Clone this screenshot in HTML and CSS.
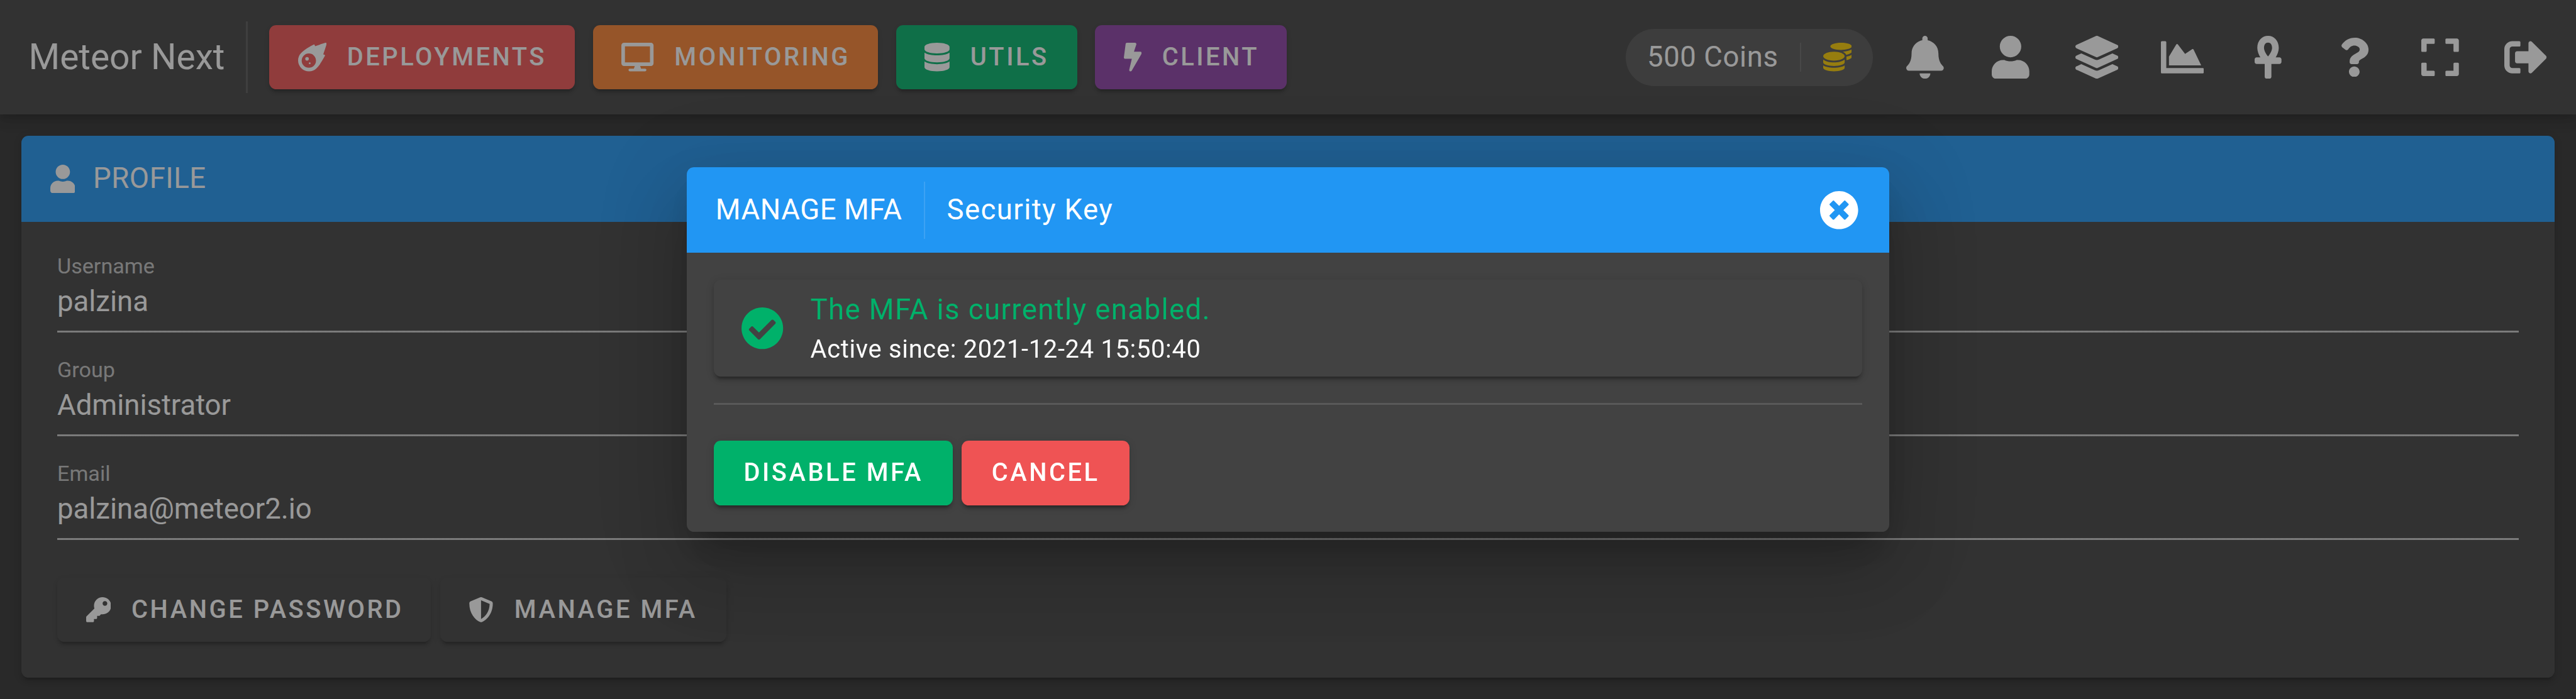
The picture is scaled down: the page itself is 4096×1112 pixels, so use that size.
FILE: index.html
```html
<!DOCTYPE html>
<html lang="en">
<head>
<meta charset="utf-8">
<title>Meteor Next</title>
<link rel="stylesheet" href="styles.css">
</head>
<body>
<div class="app">
  <header class="app-bar">
    <div class="app-title">Meteor Next</div>
    <span class="bar-divider"></span>
    <nav class="nav">
      <a class="btn red nav-deployments"><svg class="w512" viewBox="0 0 512 512"><path d="M511.328,20.8027c-11.60759,38.70264-34.30724,111.70173-61.30311,187.70077,6.99893,2.09372,13.4042,4,18.60653,5.59368a16.06158,16.06158,0,0,1,9.49854,22.906c-22.106,42.29635-82.69047,152.795-142.47819,214.40356-.99984,1.09373-1.99969,2.5-2.99954,3.49995A194.83046,194.83046,0,1,1,57.085,179.41009c.99985-1,2.40588-2,3.49947-3,61.59994-59.90549,171.97367-120.40473,214.37343-142.4982a16.058,16.058,0,0,1,22.90274,9.49988c1.59351,5.09368,3.49947,11.5936,5.5929,18.59351C379.34818,35.00565,452.43074,12.30281,491.12794.70921A16.18325,16.18325,0,0,1,511.328,20.8027ZM319.951,320.00207A127.98041,127.98041,0,1,0,191.97061,448.00046,127.97573,127.97573,0,0,0,319.951,320.00207Zm-127.98041-31.9996a31.9951,31.9951,0,1,1-31.9951-31.9996A31.959,31.959,0,0,1,191.97061,288.00247Zm31.9951,79.999a15.99755,15.99755,0,1,1-15.99755-15.9998A16.04975,16.04975,0,0,1,223.96571,368.00147Z"/></svg>DEPLOYMENTS</a>
      <a class="btn orange nav-monitoring"><svg class="w576" viewBox="0 0 576 512"><path d="M528 0H48C21.5 0 0 21.5 0 48v320c0 26.5 21.5 48 48 48h192l-16 48h-72c-13.3 0-24 10.7-24 24s10.7 24 24 24h272c13.3 0 24-10.7 24-24s-10.7-24-24-24h-72l-16-48h192c26.5 0 48-21.5 48-48V48c0-26.5-21.5-48-48-48zm-16 352H64V64h448v288z"/></svg>MONITORING</a>
      <a class="btn green nav-utils"><svg class="w448" viewBox="0 0 448 512"><path d="M448 73.143v45.714C448 159.143 347.667 192 224 192S0 159.143 0 118.857V73.143C0 32.857 100.333 0 224 0s224 32.857 224 73.143zM448 176v102.857C448 319.143 347.667 352 224 352S0 319.143 0 278.857V176c48.125 33.143 136.208 48.572 224 48.572S399.874 209.143 448 176zm0 160v102.857C448 479.143 347.667 512 224 512S0 479.143 0 438.857V336c48.125 33.143 136.208 48.572 224 48.572S399.874 369.143 448 336z"/></svg>UTILS</a>
      <a class="btn purple nav-client"><svg class="w320" viewBox="0 0 320 512"><path d="M296 160H180.6l42.6-129.8C227.2 15 215.7 0 200 0H56C44 0 33.8 8.9 32.2 20.8l-32 240C-1.7 275.2 9.5 288 24 288h118.7L96.6 482.5c-3.6 15.2 8 29.5 23.3 29.5 8.4 0 16.4-4.4 20.8-12l176-304c9.3-15.9-2.2-36-20.7-36z"/></svg>CLIENT</a>
    </nav>
    <div class="chip">
      <span>500 Coins</span>
      <span class="chip-divider"></span>
      <svg viewBox="0 0 512 512"><path d="M0 405.3V448c0 35.3 86 64 192 64s192-28.7 192-64v-42.7C342.7 434.4 267.2 448 192 448S41.3 434.4 0 405.3zM320 128c106 0 192-28.7 192-64S426 0 320 0 128 28.7 128 64s86 64 192 64zM0 300.4V352c0 35.3 86 64 192 64s192-28.7 192-64v-51.6c-41.3 34-116.9 51.6-192 51.6S41.3 334.4 0 300.4zm416 11c57.3-11.1 96-31.7 96-55.4v-42.7c-23.2 16.4-57.3 27.6-96 34.5v63.6zM192 160C86 160 0 195.8 0 240s86 80 192 80 192-35.8 192-80-86-80-192-80zm219.3 56.3c60-10.8 100.7-32 100.7-56.3v-42.7c-35.5 25.1-96.5 38.6-160.7 41.8 29.5 14.3 51.2 33.5 60 57.2z"/></svg>
    </div>
    <div class="actions">
      <a class="icon-btn"><svg viewBox="0 0 448 512"><path d="M224 512c35.32 0 63.97-28.65 63.97-64H160.03c0 35.35 28.65 64 63.97 64zm215.39-149.71c-19.32-20.76-55.47-51.99-55.47-154.29 0-77.7-54.48-139.9-127.94-155.16V32c0-17.67-14.32-32-31.98-32s-31.98 14.33-31.98 32v20.84C118.56 68.1 64.08 130.3 64.08 208c0 102.3-36.15 133.53-55.47 154.29-6 6.45-8.66 14.16-8.61 21.71.11 16.4 12.98 32 32.1 32h383.8c19.12 0 32-15.6 32.1-32 .05-7.55-2.61-15.27-8.61-21.71z"/></svg></a>
      <a class="icon-btn"><svg viewBox="0 0 448 512"><path d="M224 256c70.7 0 128-57.3 128-128S294.7 0 224 0 96 57.3 96 128s57.3 128 128 128zm89.6 32h-16.7c-22.2 10.2-46.9 16-72.9 16s-50.6-5.8-72.9-16h-16.7C60.2 288 0 348.2 0 422.4V464c0 26.5 21.5 48 48 48h352c26.5 0 48-21.5 48-48v-41.6c0-74.2-60.2-134.4-134.4-134.4z"/></svg></a>
      <a class="icon-btn"><svg viewBox="0 0 512 512"><path d="M12.41 148.02l232.94 105.67c6.8 3.09 14.49 3.09 21.29 0l232.94-105.67c16.55-7.51 16.55-32.52 0-40.03L266.65 2.31a25.607 25.607 0 0 0-21.29 0L12.41 107.98c-16.55 7.51-16.55 32.53 0 40.04zm487.18 88.28l-58.09-26.33-161.64 73.27c-7.56 3.43-15.59 5.17-23.86 5.17s-16.29-1.74-23.86-5.17L70.51 209.97l-58.1 26.33c-16.55 7.5-16.55 32.5 0 40l232.94 105.59c6.8 3.08 14.49 3.08 21.29 0L499.59 276.3c16.55-7.5 16.55-32.5 0-40zm0 127.8l-57.87-26.23-161.86 73.37c-7.56 3.43-15.59 5.17-23.86 5.17s-16.29-1.74-23.86-5.17L70.29 337.87 12.41 364.1c-16.55 7.5-16.55 32.5 0 40l232.94 105.59c6.8 3.08 14.49 3.08 21.29 0L499.59 404.1c16.55-7.5 16.55-32.5 0-40z"/></svg></a>
      <a class="icon-btn"><svg viewBox="0 0 512 512"><path d="M500 384c6.6 0 12 5.4 12 12v40c0 6.6-5.4 12-12 12H12c-6.6 0-12-5.4-12-12V76c0-6.6 5.4-12 12-12h40c6.6 0 12 5.4 12 12v308h436zM372.7 159.5L288 216l-85.3-113.7c-5.1-6.8-15.5-6.3-19.9 1L96 248v104h384l-89.9-187.8c-3.2-6.5-11.4-8.7-17.4-4.7z"/></svg></a>
      <a class="icon-btn"><svg viewBox="0 0 320 512"><path d="M296 256h-44.62C272.46 222.01 288 181.65 288 144 288 55.63 230.69 0 160 0S32 55.63 32 144c0 37.65 15.54 78.01 36.62 112H24c-13.25 0-24 10.74-24 24v32c0 13.25 10.75 24 24 24h96v152c0 13.25 10.75 24 24 24h32c13.25 0 24-10.75 24-24V336h96c13.25 0 24-10.75 24-24v-32c0-13.26-10.75-24-24-24zM160 80c29.61 0 48 24.52 48 64 0 34.66-27.14 78.14-48 100.87-20.86-22.72-48-66.21-48-100.87 0-39.48 18.39-64 48-64z"/></svg></a>
      <a class="icon-btn question"><svg viewBox="0 0 384 512"><path d="M202.021 0C122.202 0 70.503 32.703 29.914 91.026c-7.363 10.58-5.093 25.086 5.178 32.874l43.138 32.709c10.373 7.865 25.132 6.026 33.253-4.148 25.049-31.381 43.63-49.449 82.757-49.449 30.764 0 68.816 19.799 68.816 49.631 0 22.552-18.617 34.134-48.993 51.164-35.423 19.86-82.299 44.576-82.299 106.405V320c0 13.255 10.745 24 24 24h72.471c13.255 0 24-10.745 24-24v-5.773c0-42.86 125.268-44.645 125.268-160.627C377.504 66.256 286.902 0 202.021 0zM192 373.459c-38.196 0-69.271 31.075-69.271 69.271 0 38.195 31.075 69.27 69.271 69.27s69.271-31.075 69.271-69.271-31.075-69.27-69.271-69.27z"/></svg></a>
      <a class="icon-btn"><svg viewBox="0 0 448 512"><path d="M0 180V56c0-13.3 10.7-24 24-24h124c6.6 0 12 5.4 12 12v40c0 6.6-5.4 12-12 12H64v84c0 6.6-5.4 12-12 12H12c-6.6 0-12-5.4-12-12zM288 44v40c0 6.6 5.4 12 12 12h84v84c0 6.6 5.4 12 12 12h40c6.6 0 12-5.4 12-12V56c0-13.3-10.7-24-24-24H300c-6.6 0-12 5.4-12 12zm148 276h-40c-6.6 0-12 5.4-12 12v84h-84c-6.6 0-12 5.4-12 12v40c0 6.6 5.4 12 12 12h124c13.3 0 24-10.7 24-24V332c0-6.6-5.4-12-12-12zM160 468v-40c0-6.6-5.4-12-12-12H64v-84c0-6.6-5.4-12-12-12H12c-6.6 0-12 5.4-12 12v124c0 13.3 10.7 24 24 24h124c6.6 0 12-5.4 12-12z"/></svg></a>
      <a class="icon-btn"><svg viewBox="0 0 512 512"><path d="M497 273L329 441c-15 15-41 4.5-41-17v-96H152c-13.3 0-24-10.7-24-24v-96c0-13.3 10.7-24 24-24h136V88c0-21.4 25.9-32 41-17l168 168c9.3 9.4 9.3 24.6 0 34zM192 436v-40c0-6.6-5.4-12-12-12H96c-17.7 0-32-14.3-32-32V160c0-17.7 14.3-32 32-32h84c6.6 0 12-5.4 12-12V76c0-6.6-5.4-12-12-12H96c-53 0-96 43-96 96v192c0 53 43 96 96 96h84c6.6 0 12-5.4 12-12z"/></svg></a>
    </div>
  </header>

  <main class="card">
    <div class="card-bar">
      <svg viewBox="0 0 448 512"><path d="M224 256c70.7 0 128-57.3 128-128S294.7 0 224 0 96 57.3 96 128s57.3 128 128 128zm89.6 32h-16.7c-22.2 10.2-46.9 16-72.9 16s-50.6-5.8-72.9-16h-16.7C60.2 288 0 348.2 0 422.4V464c0 26.5 21.5 48 48 48h352c26.5 0 48-21.5 48-48v-41.6c0-74.2-60.2-134.4-134.4-134.4z"/></svg>
      <span>PROFILE</span>
    </div>
    <div class="card-body">
      <div class="field"><label>Username</label><div class="value">palzina</div></div>
      <div class="field"><label>Group</label><div class="value">Administrator</div></div>
      <div class="field"><label>Email</label><div class="value">palzina@meteor2.io</div></div>
      <div class="card-actions">
        <a class="btn small-icon act-password"><svg viewBox="0 0 512 512"><path d="M512 176.001C512 273.203 433.202 352 336 352c-11.22 0-22.19-1.062-32.827-3.069l-24.012 27.014A23.999 23.999 0 0 1 261.223 384H224v40c0 13.255-10.745 24-24 24h-40v40c0 13.255-10.745 24-24 24H24c-13.255 0-24-10.745-24-24v-78.059c0-6.365 2.529-12.47 7.029-16.971l161.802-161.802C163.108 213.814 160 195.271 160 176 160 78.798 238.797.001 335.999 0 433.488-.001 512 78.511 512 176.001zM336 128c0 26.51 21.49 48 48 48s48-21.49 48-48-21.49-48-48-48-48 21.49-48 48z"/></svg>CHANGE PASSWORD</a>
        <a class="btn small-icon act-mfa"><svg viewBox="0 0 512 512"><path d="M466.5 83.7l-192-80a48.15 48.15 0 0 0-36.9 0l-192 80C27.7 91.1 16 108.6 16 128c0 198.5 114.5 335.7 221.5 380.3 11.8 4.9 25.1 4.9 36.9 0C360.1 472.6 496 349.3 496 128c0-19.4-11.7-36.9-29.5-44.3zM256.1 446.3l-.1-381 175.9 73.3c-3.3 151.4-82.1 261.1-175.8 307.7z"/></svg>MANAGE MFA</a>
      </div>
    </div>
  </main>
</div>

<div class="scrim">
  <section class="dialog">
    <div class="dialog-bar">
      <span class="dialog-title">MANAGE MFA</span>
      <span class="dialog-divider"></span>
      <span class="dialog-sub">Security Key</span>
      <svg class="close" viewBox="0 0 512 512"><path d="M256 8C119 8 8 119 8 256s111 248 248 248 248-111 248-248S393 8 256 8zm121.6 313.1c4.7 4.7 4.7 12.3 0 17L338 377.6c-4.7 4.7-12.3 4.7-17 0L256 312l-65.1 65.6c-4.7 4.7-12.3 4.7-17 0L134.4 338c-4.7-4.7-4.7-12.3 0-17l65.6-65-65.6-65.1c-4.7-4.7-4.7-12.3 0-17l39.6-39.6c4.7-4.7 12.3-4.7 17 0l65 65.7 65.1-65.6c4.7-4.7 12.3-4.7 17 0l39.6 39.6c4.7 4.7 4.7 12.3 0 17L312 256l65.6 65.1z"/></svg>
    </div>
    <div class="dialog-body">
      <div class="status">
        <svg viewBox="0 0 512 512"><path d="M504 256c0 136.967-111.033 248-248 248S8 392.967 8 256 119.033 8 256 8s248 111.033 248 248zM227.314 387.314l184-184c6.248-6.248 6.248-16.379 0-22.627l-22.627-22.627c-6.248-6.249-16.379-6.249-22.628 0L216 308.118l-70.059-70.059c-6.248-6.248-16.379-6.248-22.628 0l-22.627 22.627c-6.248 6.248-6.248 16.379 0 22.627l104 104c6.249 6.249 16.379 6.249 22.628.001z"/></svg>
        <div class="status-text">
          <div class="status-title">The MFA is currently enabled.</div>
          <div class="status-sub">Active since: 2021-12-24 15:50:40</div>
        </div>
      </div>
      <div class="rule"></div>
      <div class="dialog-actions">
        <a class="btn green act-disable">DISABLE MFA</a>
        <a class="btn red act-cancel">CANCEL</a>
      </div>
    </div>
  </section>
</div>
</body>
</html>
```
FILE: styles.css
```css
/* 1rem is ten layout units */
html {
  font-size: 28.4444px;
}

* {
  box-sizing: border-box;
}

body {
  margin: 0;
  height: 100vh;
  overflow: hidden;
  background: #303030;
  color: #fff;
  font-family: Roboto, "Liberation Sans", sans-serif;
  font-size: 1.6rem;
  line-height: 2.4rem;
}

svg {
  display: block;
  flex: none;
  fill: currentColor;
}

.app {
  display: flex;
  flex-direction: column;
  height: 100vh;
}

/* App bar */
.app-bar {
  display: flex;
  align-items: center;
  flex: none;
  height: 6.4rem;
  padding: 0 0.4rem 0 1.6rem;
  background: #424242;
  box-shadow: 0 0.2rem 0.4rem -0.1rem rgba(0, 0, 0, 0.2), 0 0.4rem 0.5rem rgba(0, 0, 0, 0.14), 0 0.1rem 1rem rgba(0, 0, 0, 0.12);
}

.app-title {
  width: 12.15rem;
  font-size: 2rem;
  white-space: nowrap;
}

.bar-divider {
  width: 0.1rem;
  height: 4rem;
  margin-right: 1.2rem;
  background: rgba(255, 255, 255, 0.12);
}

.nav {
  display: flex;
  gap: 1rem;
}

.btn {
  display: flex;
  align-items: center;
  height: 3.6rem;
  padding-left: 1.6rem;
  border-radius: 0.4rem;
  font-size: 1.4rem;
  font-weight: 500;
  letter-spacing: 0.0892857em;
  white-space: nowrap;
  box-shadow: 0 0.3rem 0.1rem -0.2rem rgba(0, 0, 0, 0.2), 0 0.2rem 0.2rem rgba(0, 0, 0, 0.14), 0 0.1rem 0.5rem rgba(0, 0, 0, 0.12);
}

.btn svg {
  height: 1.6rem;
  margin-right: 1.15rem;
}

.nav-deployments { width: 17.1rem; }
.nav-monitoring { width: 15.94rem; }
.nav-utils { width: 10.12rem; }
.nav-client { width: 10.74rem; }

.w320 { width: 1rem; }
.w448 { width: 1.4rem; }
.w512 { width: 1.6rem; }
.w576 { width: 1.8rem; }

.red { background: #ef5354; }
.orange { background: #fa8131; }
.green { background: #00b16a; }
.purple { background: #8c40a6; }

.chip {
  display: flex;
  align-items: center;
  height: 3.2rem;
  margin-left: auto;
  margin-right: 0.5rem;
  padding: 0 1.2rem;
  border-radius: 1.6rem;
  background: #555;
  letter-spacing: 0.0125em;
  white-space: nowrap;
}

.chip-divider {
  width: 0.1rem;
  height: 1.6rem;
  margin: 0 1.2rem;
  background: rgba(255, 255, 255, 0.12);
}

.chip svg {
  width: 1.6rem;
  height: 1.6rem;
  fill: #facb00;
}

.actions {
  display: flex;
}

.icon-btn {
  display: flex;
  align-items: center;
  justify-content: center;
  width: 4.8rem;
  height: 4.8rem;
}

.icon-btn svg {
  height: 2.4rem;
}

.question svg {
  height: 2.2rem;
}

/* Profile card */
.card {
  flex: 1;
  margin: 1.2rem;
  border-radius: 0.4rem;
  background: #424242;
  box-shadow: 0 0.3rem 0.1rem -0.2rem rgba(0, 0, 0, 0.2), 0 0.2rem 0.2rem rgba(0, 0, 0, 0.14), 0 0.1rem 0.5rem rgba(0, 0, 0, 0.12);
}

.card-bar {
  display: flex;
  align-items: center;
  gap: 1rem;
  height: 4.8rem;
  padding: 0 1.6rem;
  border-radius: 0.4rem 0.4rem 0 0;
  background: #2196f3;
  letter-spacing: 0.0125em;
}

.card-bar svg {
  width: 1.4rem;
  height: 1.6rem;
}

.card-body {
  padding: 1.5rem 2rem 0;
}

.field {
  height: 4.7rem;
  margin-bottom: 1.1rem;
  background: linear-gradient(rgba(255, 255, 255, 0.7), rgba(255, 255, 255, 0.7)) bottom / 100% 3px no-repeat;
}

.field label {
  display: block;
  color: rgba(255, 255, 255, 0.7);
  font-size: 1.2rem;
  line-height: 2rem;
}

.field .value {
  line-height: 2rem;
}

.card-actions {
  display: flex;
  gap: 0.5rem;
  padding-top: 1rem;
}

.small-icon svg {
  width: 1.4rem;
  height: 1.4rem;
}

.act-password { width: 20.9rem; }
.act-mfa { width: 15.99rem; }

/* Dialog over the dimmed page */
.scrim {
  position: fixed;
  inset: 0;
  display: flex;
  align-items: center;
  justify-content: center;
  background: rgba(33, 33, 33, 0.46);
}

.dialog {
  width: 67.2rem;
  height: 20.4rem;
  border-radius: 0.4rem;
  background: #424242;
  box-shadow: 0 1.1rem 1.5rem -0.7rem rgba(0, 0, 0, 0.2), 0 2.4rem 3.8rem 0.3rem rgba(0, 0, 0, 0.14), 0 0.9rem 4.6rem 0.8rem rgba(0, 0, 0, 0.12);
}

.dialog-bar {
  display: flex;
  align-items: center;
  height: 4.8rem;
  padding: 0 1.7rem 0 1.6rem;
  border-radius: 0.4rem 0.4rem 0 0;
  background: #2196f3;
  white-space: nowrap;
}

.dialog-title {
  letter-spacing: 0.0125em;
}

.dialog-divider {
  width: 0.1rem;
  height: 3.2rem;
  margin: 0 1.2rem;
  background: rgba(255, 255, 255, 0.12);
}

.dialog-sub {
  letter-spacing: 0.03125em;
}

.close {
  width: 2.2rem;
  height: 2.2rem;
  margin-left: auto;
}

.dialog-body {
  padding: 1.5rem;
}

.status {
  display: flex;
  align-items: center;
  gap: 1.5rem;
  height: 5.4rem;
  padding: 0 1.5rem;
  border-radius: 0.4rem;
  box-shadow: 0 0.3rem 0.1rem -0.2rem rgba(0, 0, 0, 0.2), 0 0.2rem 0.2rem rgba(0, 0, 0, 0.14), 0 0.1rem 0.5rem rgba(0, 0, 0, 0.12);
}

.status svg {
  width: 2.4rem;
  height: 2.4rem;
  fill: #00b16a;
}

.status-text {
  padding-top: 0.2rem;
}

.status-title {
  color: #00b16a;
  letter-spacing: 0.03125em;
  line-height: 2.2rem;
}

.status-sub {
  font-size: 1.4rem;
  letter-spacing: 0.0178571em;
  line-height: 2.2rem;
}

.rule {
  height: 3px;
  margin: 1.5rem 0 2rem;
  background: rgba(255, 255, 255, 0.12);
}

.dialog-actions {
  display: flex;
  gap: 0.5rem;
}

.dialog-actions .btn {
  padding-left: 1.67rem;
}

.act-disable { width: 13.36rem; }
.act-cancel { width: 9.38rem; }
```
